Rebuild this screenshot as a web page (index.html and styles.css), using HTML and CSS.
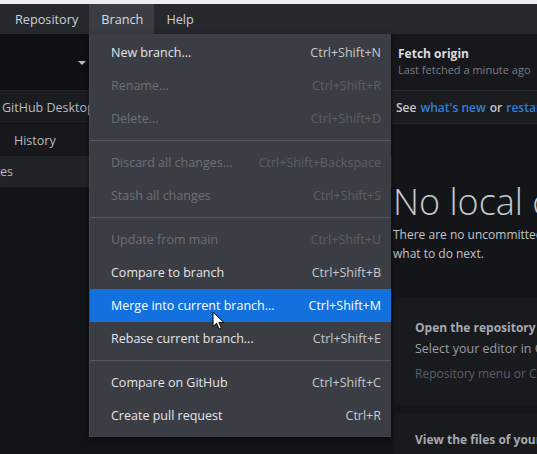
FILE: index.html
```html
<!DOCTYPE html>
<html>
<head>
<meta charset="utf-8">
<link rel="stylesheet" href="styles.css">
</head>
<body>
<div class="topstrip"></div>
<div class="menubar">
  <div class="mb-item">Repository</div>
  <div class="mb-item active">Branch</div>
  <div class="mb-item">Help</div>
</div>
<div class="app">
  <div class="sidebar">
    <div class="toolbar-left">
      <div class="repo-btn"><span class="caret"></span></div>
      <div class="branch-btn"></div>
    </div>
    <div class="side-row repo-row">GitHub Desktop</div>
    <div class="side-row tabs-row"><span class="tab">History</span></div>
    <div class="side-row changes-row">Changes</div>
    <div class="side-rest"></div>
  </div>
  <div class="main">
    <div class="fetch">
      <div class="fetch-title">Fetch origin</div>
      <div class="fetch-sub">Last fetched a minute ago</div>
    </div>
    <div class="banner">See <a class="link">what's new</a> or <a class="link">restart</a> to update</div>
    <div class="blank">
      <h1 class="big">No local changes</h1>
      <p class="desc">There are no uncommitted changes in this repository. Here are some friendly suggestions for<br>what to do next.</p>
      <div class="card">
        <div class="card-title">Open the repository in your external editor</div>
        <div class="card-text">Select your editor in Options</div>
        <div class="card-hint">Repository menu or Ctrl+Shift+A</div>
      </div>
      <div class="card card2">
        <div class="card-title">View the files of your repository in Explorer</div>
      </div>
    </div>
  </div>
</div>

<div class="menu">
  <div class="mi"><span class="lbl">New branch...</span><span class="sc">Ctrl+Shift+N</span></div>
  <div class="mi dis"><span class="lbl">Rename...</span><span class="sc">Ctrl+Shift+R</span></div>
  <div class="mi dis"><span class="lbl">Delete...</span><span class="sc">Ctrl+Shift+D</span></div>
  <div class="sep"></div>
  <div class="mi dis"><span class="lbl">Discard all changes...</span><span class="sc">Ctrl+Shift+Backspace</span></div>
  <div class="mi dis"><span class="lbl">Stash all changes</span><span class="sc">Ctrl+Shift+S</span></div>
  <div class="sep"></div>
  <div class="mi dis"><span class="lbl">Update from main</span><span class="sc">Ctrl+Shift+U</span></div>
  <div class="mi"><span class="lbl">Compare to branch</span><span class="sc">Ctrl+Shift+B</span></div>
  <div class="mi hl"><span class="lbl">Merge into current branch...</span><span class="sc">Ctrl+Shift+M</span></div>
  <div class="mi"><span class="lbl">Rebase current branch...</span><span class="sc">Ctrl+Shift+E</span></div>
  <div class="sep"></div>
  <div class="mi"><span class="lbl">Compare on GitHub</span><span class="sc">Ctrl+Shift+C</span></div>
  <div class="mi"><span class="lbl">Create pull request</span><span class="sc">Ctrl+R</span></div>
</div>

<svg class="cursor" width="14" height="20" viewBox="0 0 14 20">
  <path d="M1 1 L1 15.5 L4.6 12.2 L7.2 18.2 L9.4 17.2 L6.9 11.4 L11.8 11.4 Z" fill="#ffffff" stroke="#000000" stroke-width="1" stroke-linejoin="round"/>
</svg>
</body>
</html>
```

FILE: styles.css
```css
html, body {
  margin: 0;
  padding: 0;
}
body {
  width: 537px;
  height: 454px;
  overflow: hidden;
  background: #131518;
  font-family: "Open Sans", "Noto Sans", sans-serif;
  font-size: 12px;
  color: #d6d9dc;
  position: relative;
}
.topstrip {
  height: 4px;
  background: #eceef0;
}
.menubar {
  height: 30px;
  background: #25282d;
  display: flex;
  align-items: stretch;
  padding-left: 3px;
}
.mb-item {
  display: flex;
  align-items: center;
  padding: 0 11px 0 12px;
  font-size: 12.7px;
  font-weight: 500;
  color: #cdd1d6;
}
.mb-item.active {
  background: #3a3d43;
  color: #d8dbdf;
}
.app {
  display: flex;
  height: 420px;
  overflow: hidden;
}
.sidebar {
  width: 392px;
  flex: none;
  display: flex;
  flex-direction: column;
  background: #121417;
}
.toolbar-left {
  height: 56px;
  flex: none;
  display: flex;
  border-bottom: 1px solid #22252a;
}
.repo-btn {
  width: 92px;
  background: #0e1013;
  display: flex;
  align-items: center;
  justify-content: flex-end;
  padding-right: 5px;
  box-sizing: border-box;
  border-right: 1px solid #202328;
}
.caret {
  width: 0;
  height: 0;
  border-left: 4px solid transparent;
  border-right: 4px solid transparent;
  border-top: 4px solid #b9bdc2;
  margin-top: 2px;
}
.branch-btn {
  flex: 1;
  background: #0e1013;
}
.side-row {
  flex: none;
  height: 32px;
  display: flex;
  align-items: center;
  color: #b8bcc1;
  font-size: 12.5px;
  box-sizing: border-box;
  white-space: nowrap;
}
.repo-row {
  background: #1a1c20;
  padding-left: 2px;
  border-bottom: 1px solid #101215;
  height: 33px;
}
.tabs-row {
  background: #16181b;
  padding-left: 14px;
}
.changes-row {
  background: #212328;
  margin-left: -37px;
  height: 31px;
}
.side-rest {
  flex: 1;
  background: #121417;
}
.main {
  flex: 1;
  display: flex;
  flex-direction: column;
  min-width: 0;
  white-space: nowrap;
  overflow: hidden;
}
.fetch {
  flex: none;
  height: 57px;
  background: #16181c;
  padding: 12px 0 0 6px;
  box-sizing: border-box;
  border-bottom: 1px solid #2a2d32;
}
.fetch-title {
  font-weight: 700;
  color: #dadde0;
  font-size: 12px;
  line-height: 16px;
}
.fetch-sub {
  color: #7a7e85;
  font-size: 11px;
  line-height: 15px;
}
.banner {
  flex: none;
  height: 33px;
  background: #1a1c20;
  border-bottom: 1px solid #26292e;
  display: flex;
  align-items: center;
  gap: 4px;
  padding-left: 4px;
  font-weight: 600;
  color: #c6c9cd;
  box-sizing: border-box;
}
.link {
  color: #2f7fd8;
}
.blank {
  flex: none;
  padding-left: 1px;
  padding-top: 56px;
}
.big {
  margin: 0;
  font-size: 36px;
  font-weight: 300;
  line-height: 44px;
  color: #c6c9ce;
}
.desc {
  margin: 1px 0 0 0;
  font-size: 12px;
  line-height: 19px;
  color: #c2c5ca;
}
.card {
  margin-top: 34px;
  margin-left: 1px;
  background: #181a1e;
  padding: 22px 0 0 21px;
  height: 108px;
  box-sizing: border-box;
}
.card2 {
  margin-top: 8px;
  padding-top: 18px;
}
.card-title {
  font-weight: 700;
  color: #a6aaaf;
  line-height: 18px;
}
.card-text {
  color: #9a9ea4;
  line-height: 20px;
  margin-top: 2px;
  font-size: 12.5px;
}
.card-hint {
  color: #5b5f65;
  line-height: 20px;
  margin-top: 5px;
}
.menu {
  position: absolute;
  left: 89px;
  top: 34px;
  width: 302px;
  background: #3a3d43;
  padding: 2px 0 5px 0;
  box-shadow: 0 2px 6px rgba(0, 0, 0, 0.5);
  border-left: 1px solid #45484e;
  box-sizing: border-box;
}
.mi {
  height: 33px;
  display: flex;
  align-items: center;
  justify-content: space-between;
  padding: 0 10px 0 21px;
  color: #e4e6e9;
  font-size: 12.5px;
}
.mi .sc {
  color: #c6c9cd;
}
.mi.dis .lbl {
  color: #6c7076;
}
.mi.dis .sc {
  color: #5c6066;
}
.mi.hl {
  background: #1271de;
  color: #ffffff;
}
.mi.hl .sc {
  color: #ffffff;
}
.sep {
  height: 1px;
  background: #55585e;
  margin: 5px 0;
}
.cursor {
  position: absolute;
  left: 212px;
  top: 311px;
}
```
